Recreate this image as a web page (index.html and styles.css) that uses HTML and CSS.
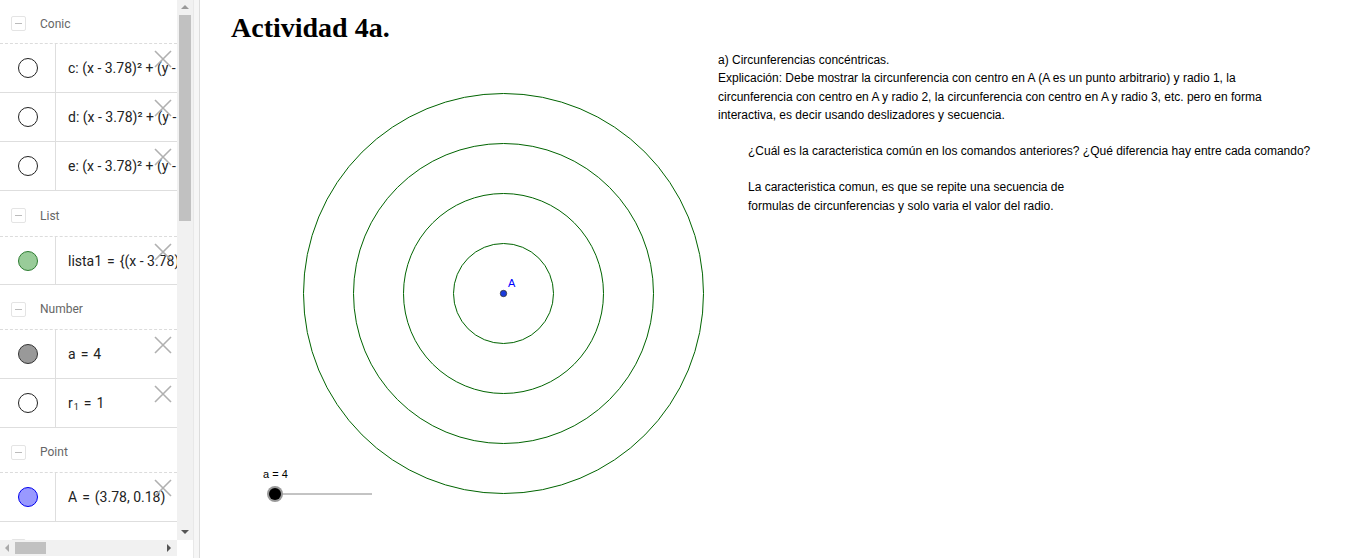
FILE: index.html
```html
<!DOCTYPE html>
<html>
<head>
<meta charset="utf-8">
<link rel="stylesheet" href="styles.css">
</head>
<body>
<div class="app">
  <div class="algebra">
    <div class="alg-main">
      <div class="list">
        <div class="hdr h44"><span class="minus"></span><span class="hname">Conic</span></div>
        <div class="row"><div class="mk"><span class="dot empty"></span></div><div class="val"><span>c: (x - 3.78)² + (y - 0.18)² = 9</span></div><span class="x"><svg width="18" height="18" viewBox="0 0 18 18"><path d="M1 1L17 17M17 1L1 17" stroke="#b0b0b0" stroke-width="1.6"/></svg></span></div>
        <div class="row"><div class="mk"><span class="dot empty"></span></div><div class="val"><span>d: (x - 3.78)² + (y - 0.18)² = 16</span></div><span class="x"><svg width="18" height="18" viewBox="0 0 18 18"><path d="M1 1L17 17M17 1L1 17" stroke="#b0b0b0" stroke-width="1.6"/></svg></span></div>
        <div class="row"><div class="mk"><span class="dot empty"></span></div><div class="val"><span>e: (x - 3.78)² + (y - 0.18)² = 25</span></div><span class="x"><svg width="18" height="18" viewBox="0 0 18 18"><path d="M1 1L17 17M17 1L1 17" stroke="#b0b0b0" stroke-width="1.6"/></svg></span></div>
        <div class="hdr h46"><span class="minus"></span><span class="hname">List</span></div>
        <div class="row h48"><div class="mk"><span class="dot green"></span></div><div class="val"><span>lista1<span class="eq">=</span>{(x - 3.78)² + (y - 0.18)² = 1}</span></div><span class="x"><svg width="18" height="18" viewBox="0 0 18 18"><path d="M1 1L17 17M17 1L1 17" stroke="#b0b0b0" stroke-width="1.6"/></svg></span></div>
        <div class="hdr h45"><span class="minus"></span><span class="hname">Number</span></div>
        <div class="row"><div class="mk"><span class="dot grey"></span></div><div class="val"><span>a<span class="eq">=</span>4</span></div><span class="x"><svg width="18" height="18" viewBox="0 0 18 18"><path d="M1 1L17 17M17 1L1 17" stroke="#b0b0b0" stroke-width="1.6"/></svg></span></div>
        <div class="row"><div class="mk"><span class="dot empty"></span></div><div class="val"><span>r<sub>1</sub><span class="eq">=</span>1</span></div><span class="x"><svg width="18" height="18" viewBox="0 0 18 18"><path d="M1 1L17 17M17 1L1 17" stroke="#b0b0b0" stroke-width="1.6"/></svg></span></div>
        <div class="hdr h45"><span class="minus"></span><span class="hname">Point</span></div>
        <div class="row"><div class="mk"><span class="dot blue"></span></div><div class="val"><span>A<span class="eq">=</span>(3.78, 0.18)</span></div><span class="x"><svg width="18" height="18" viewBox="0 0 18 18"><path d="M1 1L17 17M17 1L1 17" stroke="#b0b0b0" stroke-width="1.6"/></svg></span></div>
        <div class="hdr h45"><span class="minus"></span><span class="hname"></span></div>
      </div>
      <div class="vscroll">
        <div class="arrow up"></div>
        <div class="vtrack"><div class="vthumb"></div></div>
        <div class="arrow down"></div>
      </div>
    </div>
    <div class="hscroll">
      <div class="harrow left"></div>
      <div class="htrack"><div class="hthumb"></div></div>
      <div class="harrow right"></div>
      <div class="corner"></div>
    </div>
  </div>
  <div class="divider"></div>
  <div class="graphics">
    <svg class="canvas" width="1166" height="558" viewBox="200 0 1166 558">
      <g fill="none" stroke="#006400" stroke-width="1">
        <circle cx="503.5" cy="293.5" r="50"/>
        <circle cx="503.5" cy="293.5" r="100"/>
        <circle cx="503.5" cy="293.5" r="150"/>
        <circle cx="503.5" cy="293.5" r="200"/>
      </g>
      <circle cx="503.5" cy="293.5" r="3.2" fill="#1a3bdc" stroke="#333" stroke-width="0.8"/>
      <line x1="275" y1="494" x2="372" y2="494" stroke="#888" stroke-width="1"/>
      <circle cx="275" cy="494" r="8" fill="#999"/>
      <circle cx="275" cy="494" r="6" fill="#000"/>
    </svg>
    <h1 class="title">Actividad 4a.</h1>
    <div class="label-a">A</div>
    <div class="slider-label">a = 4</div>
    <div class="text1">
      <p>a) Circunferencias concéntricas.</p>
      <p>Explicación: Debe mostrar la circunferencia con centro en A (A es un punto arbitrario) y radio 1, la</p>
      <p>circunferencia con centro en A y radio 2, la circunferencia con centro en A y radio 3, etc. pero en forma</p>
      <p>interactiva, es decir usando deslizadores y secuencia.</p>
    </div>
    <div class="text2">
      <p>¿Cuál es la caracteristica común en los comandos anteriores? ¿Qué diferencia hay entre cada comando?</p>
      <p class="gap">La caracteristica comun, es que se repite una secuencia de</p>
      <p>formulas de circunferencias y solo varia el valor del radio.</p>
    </div>
  </div>
</div>
</body>
</html>
```
FILE: styles.css
```css
* { box-sizing: border-box; }
html, body { margin: 0; padding: 0; background: #fff; }
body { width: 1366px; height: 558px; overflow: hidden; font-family: "Open Sans", "Liberation Sans", sans-serif; }
.app { display: flex; height: 558px; }

.algebra { width: 193px; flex-shrink: 0; height: 558px; display: flex; flex-direction: column; }
.alg-main { display: flex; height: 540px; }
.list { width: 177px; flex-shrink: 0; overflow: hidden; }
.hdr { height: 49px; display: flex; align-items: center; padding-top: 4px; border-bottom: 1px dashed #dcdcdc; }
.hdr.h44 { height: 44px; }
.hdr.h46 { height: 46px; }
.hdr.h45 { height: 45px; }
.minus { width: 15px; height: 15px; margin-left: 11px; border: 1px solid #e4e4e4; border-radius: 2px; position: relative; }
.minus::after { content: ""; position: absolute; left: 3px; right: 3px; top: 6px; height: 1px; background: #bbb; }
.hname { margin-left: 14px; font-size: 12px; color: #666; font-family: "Roboto", "Liberation Sans", sans-serif; }
.row { height: 49px; display: flex; border-bottom: 1px solid #dedede; position: relative; }
.row.h48 { height: 48px; }
.mk { width: 56px; flex-shrink: 0; border-right: 1px solid #dedede; display: flex; align-items: center; justify-content: center; }
.dot { width: 20px; height: 20px; border-radius: 50%; border: 1px solid #222; display: block; }
.dot.green { background: #99cc99; border-color: #2e7d32; }
.dot.grey { background: #999; border-color: #333; }
.dot.blue { background: #9999ff; border-color: #0000ee; }
.val { flex: 1; min-width: 0; overflow: hidden; padding-left: 12px; display: flex; align-items: center; white-space: nowrap; font-size: 14px; color: #222; font-family: "Roboto", "Liberation Sans", sans-serif; }
.val .eq { margin: 0 5px; }
.val sub { font-size: 9px; vertical-align: -2px; margin-left: 1px; }
.x { position: absolute; right: 5px; top: 6px; width: 18px; height: 18px; }

.vscroll { width: 16px; background: #f1f1f1; display: flex; flex-direction: column; }
.arrow { height: 15px; position: relative; }
.arrow.up::after { content: ""; position: absolute; left: 4px; top: 5px; border: 4px solid transparent; border-bottom: 4px solid #999; border-top: 0; }
.arrow.down::after { content: ""; position: absolute; left: 4px; top: 5px; border: 4px solid transparent; border-top: 4px solid #555; border-bottom: 0; }
.vtrack { flex: 1; padding: 0 2px; }
.vthumb { height: 206px; background: #c1c1c1; }

.hscroll { height: 16px; display: flex; background: #f1f1f1; }
.harrow { width: 15px; position: relative; }
.harrow.left::after { content: ""; position: absolute; left: 5px; top: 4px; border: 4px solid transparent; border-right: 4px solid #aaa; border-left: 0; }
.harrow.right::after { content: ""; position: absolute; left: 5px; top: 4px; border: 4px solid transparent; border-left: 4px solid #555; border-right: 0; }
.htrack { width: 147px; padding: 2px 0; }
.hthumb { width: 31px; height: 100%; background: #c1c1c1; }
.corner { width: 16px; background: #fff; }

.divider { width: 7px; flex-shrink: 0; background: #f6f6f6; border-right: 1px solid #dcdcdc; border-left: 1px solid #e8e8e8; }
.graphics { flex: 1; position: relative; }
.canvas { position: absolute; left: 0; top: 0; }
.title { position: absolute; left: 31px; top: 12px; margin: 0; font-family: "Liberation Serif", serif; font-weight: bold; font-size: 28px; color: #000; }
.label-a { position: absolute; left: 308px; top: 277px; font-family: "Liberation Sans", sans-serif; font-size: 11px; color: #0000ff; }
.slider-label { position: absolute; left: 63px; top: 468px; font-family: "Liberation Sans", sans-serif; font-size: 11px; color: #000; }
.text1, .text2 { position: absolute; font-family: "Liberation Sans", sans-serif; font-size: 12px; color: #000; }
.text1 p, .text2 p { margin: 0; line-height: 18.3px; white-space: nowrap; }
.text1 { left: 518px; top: 51px; }
.text2 { left: 548px; top: 142px; }
.text2 .gap { margin-top: 18px; }
```
